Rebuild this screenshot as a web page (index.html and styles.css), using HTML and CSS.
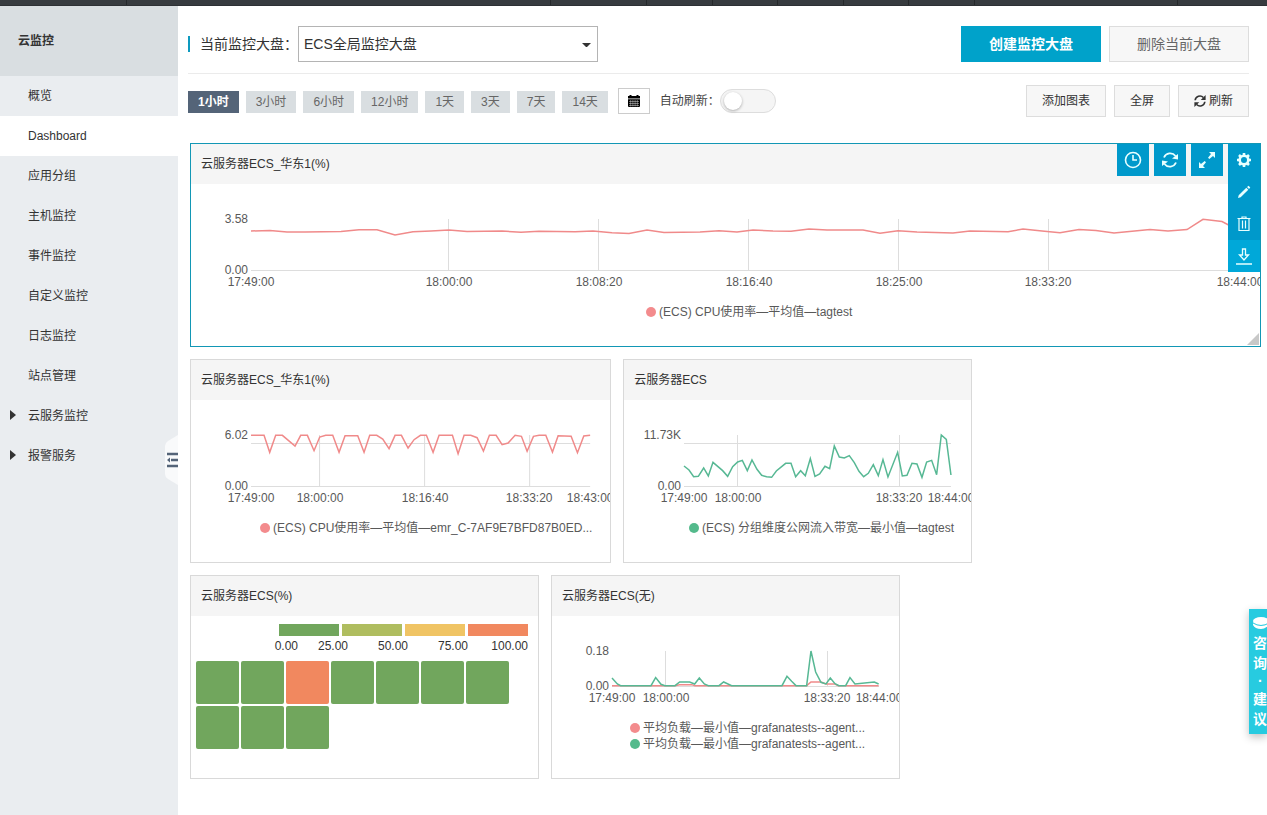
FILE: index.html
```html
<!DOCTYPE html>
<html lang="zh-CN">
<head>
<meta charset="utf-8">
<meta name="viewport" content="width=device-width, initial-scale=1">
<title>云监控</title>
<link rel="stylesheet" href="styles.css">
</head>
<body>
<div class="topbar"><i class="seg seg-a"></i><i class="seg seg-b"></i><i class="seg seg-c"></i><i class="seg seg-d"></i><i class="seg seg-d"></i><i class="seg seg-d"></i><i class="seg seg-d"></i><i class="seg seg-d"></i><i class="seg seg-e"></i></div>
<div class="layout">
  <aside class="sidebar">
    <h1 class="product">云监控</h1>
    <nav class="nav">
      <a class="nav-item" href="#">概览</a>
      <a class="nav-item active" href="#">Dashboard</a>
      <a class="nav-item" href="#">应用分组</a>
      <a class="nav-item" href="#">主机监控</a>
      <a class="nav-item" href="#">事件监控</a>
      <a class="nav-item" href="#">自定义监控</a>
      <a class="nav-item" href="#">日志监控</a>
      <a class="nav-item" href="#">站点管理</a>
      <a class="nav-item parent" href="#">云服务监控</a>
      <a class="nav-item parent" href="#">报警服务</a>
    </nav>
    <button class="collapse" type="button" aria-label="收起">
      <svg width="13" height="50" viewBox="0 0 13 50"><path d="M13 0 3 6Q0 8 0 11V39Q0 42 3 44L13 50Z" fill="#f9fafb"/><path d="M2 19H13M6 25H13M2 31H13" stroke="#546478" stroke-width="2.4"/><path d="M2 25 5 22.5V27.500Z" fill="#546478"/></svg>
    </button>
  </aside>

  <main class="main">
    <div class="title-row">
      <label class="board-label" for="board">当前监控大盘：</label>
      <div class="select-wrap">
        <select id="board" class="board-select"><option>ECS全局监控大盘</option></select>
        <svg class="caret" width="9" height="5" viewBox="0 0 9 5"><path d="M0 0H9L5.500 3.500Q4.500 4.500 3.500 3.500Z" fill="#333"/></svg>
      </div>
      <div class="title-actions">
        <button class="btn-lg primary" type="button">创建监控大盘</button>
        <button class="btn-lg" type="button">删除当前大盘</button>
      </div>
    </div>

    <div class="tool-row">
      <div class="ranges">
        <button class="range on" type="button">1小时</button>
        <button class="range" type="button">3小时</button>
        <button class="range" type="button">6小时</button>
        <button class="range" type="button">12小时</button>
        <button class="range" type="button">1天</button>
        <button class="range" type="button">3天</button>
        <button class="range" type="button">7天</button>
        <button class="range" type="button">14天</button>
      </div>
      <button class="calendar" type="button" aria-label="选择日期">
        <svg width="12" height="12" viewBox="0 0 12 12"><path d="M0 1H1.500V0H3.500V1H8.500V0H10.500V1H12V3.500H0ZM0 4.300H12V11Q12 12 11 12H1Q0 12 0 11Z" fill="#000"/><path d="M1 6.500H11M1 8.500H11M1 10.500H11M2.700 5V11.500M4.900 5V11.500M7.100 5V11.500M9.300 5V11.500" stroke="#fff" stroke-width=".4"/></svg>
      </button>
      <label class="auto-label" for="auto">自动刷新：</label>
      <input id="auto" class="switch" type="checkbox">
      <div class="tool-actions">
        <button class="btn" type="button">添加图表</button>
        <button class="btn" type="button">全屏</button>
        <button class="btn" type="button"><svg width="12" height="12" viewBox="0 0 16 16"><path d="M1.500 7A6.500 6.500 0 0 1 12.500 3.300M14.500 9A6.500 6.500 0 0 1 3.500 12.700" fill="none" stroke="#333" stroke-width="2.200"/><path d="M15.500 0V6.500H9ZM.5 16V9.500H7Z" fill="#333"/></svg>刷新</button>
      </div>
    </div>

    <div class="grid">
      <section class="card wide selected">
        <h2 class="card-title">云服务器ECS_华东1(%)</h2>
        <svg class="chart" viewBox="191 184 1069 162">
          <path class="gridline" d="M251 270.500H1240M448.500 219V270M598.500 219V270M748.500 219V270M898.500 219V270M1048.500 219V270"/>
          <polyline class="line red" points="251,231 270,230.500 287,232 305,232 341,231.500 359,229.700 377,229.700 395,235 413,231.700 431,231 449,230 467,231.500 502,231 521,232.300 539,231.300 575,231.800 593,231 612,232.700 629,233.500 647,230 664,232.600 700,232 719,230.700 737,232 753,230 773,231 791,231.300 809,229 827,230 863,230 880,233.300 898,230.800 917,232 953,233 970,231 1008,231.700 1023,229 1042,231 1060,232.700 1079,229.500 1096,230.500 1114,233 1132,231.200 1150,229.600 1168,231 1187,229.600 1203,219.300 1222,221.500 1240,231"/>
          <g class="end"><text x="248" y="223">3.58</text><text x="248" y="274">0.00</text></g>
          <g class="mid"><text x="251" y="286">17:49:00</text><text x="449" y="286">18:00:00</text><text x="599" y="286">18:08:20</text><text x="749" y="286">18:16:40</text><text x="899" y="286">18:25:00</text><text x="1048" y="286">18:33:20</text><text x="1240" y="286">18:44:00</text></g>
          <circle class="dot-red" cx="651" cy="312" r="5"/><text x="659" y="316">(ECS) CPU使用率—平均值—tagtest</text>
        </svg>
        <div class="tools">
          <button class="tool" type="button" aria-label="时间"><svg width="18" height="18" viewBox="0 0 18 18"><circle cx="9" cy="9" r="7.500" fill="none" stroke="#e8ffff" stroke-width="1.600"/><path d="M9 4V9H13" fill="none" stroke="#e8ffff" stroke-width="1.600"/></svg></button>
          <button class="tool" type="button" aria-label="刷新"><svg width="18" height="18" viewBox="0 0 18 18"><path d="M3 6.500A6.700 6.700 0 0 1 14.500 5M15 11.500A6.700 6.700 0 0 1 3.500 13" fill="none" stroke="#e8ffff" stroke-width="1.800"/><path d="M17 3V8.500L11 7.500ZM1 15V9.500L7 10.500Z" fill="#e8ffff"/></svg></button>
          <button class="tool" type="button" aria-label="放大"><svg width="18" height="18" viewBox="0 0 18 18"><path d="M11 1H17V7L15 5 11.300 8 10 6.700 13 3ZM7 17H1V11L3 13 6.700 10 8 11.300 5 15Z" fill="#e8ffff"/></svg></button>
          <div class="tool-menu">
            <button class="tool" type="button" aria-label="设置"><svg width="16" height="16" viewBox="0 0 16 16"><circle cx="8" cy="8" r="4.300" fill="none" stroke="#e8ffff" stroke-width="2.600"/><path d="M8 1V4M8 12V15M1 8H4M12 8H15M3 3 5 5M11 11 13 13M3 13 5 11M11 5 13 3" stroke="#e8ffff" stroke-width="2.600"/></svg></button>
            <button class="tool" type="button" aria-label="编辑"><svg width="14" height="14" viewBox="0 0 14 14"><path d="M1 13 1.700 10.300 9.300 2.700 11.300 4.700 3.700 12.300ZM10 2 11.500.7 13.300 2.500 12 4Z" fill="#e8ffff"/></svg></button>
            <button class="tool" type="button" aria-label="删除"><svg width="14" height="16" viewBox="0 0 14 16"><path d="M.5 2.500H13.500M5 2.500V1H9V2.500M2 2.500V14.500H12V2.500M5.500 4.500V12.500M8.500 4.500V12.500" fill="none" stroke="#e8ffff" stroke-width="1.200"/></svg></button>
            <button class="tool bright" type="button" aria-label="下载"><svg width="16" height="18" viewBox="0 0 16 18"><path d="M6.500 2H9.500V8H12.500L8 13 3.500 8H6.500ZM0 17H16" fill="none" stroke="#e8ffff" stroke-width="1.300"/></svg></button>
          </div>
        </div>
        <i class="resize"></i>
      </section>

      <section class="card medium">
        <h2 class="card-title">云服务器ECS_华东1(%)</h2>
        <svg class="chart" viewBox="191 400 419 162">
          <path class="gridline" d="M251 443.500H590M251 486.500H590M319.500 435V486M424.500 435V486M529.500 435V486"/>
          <polyline class="line red" transform="translate(185 355) scale(.3333)" points="198,241 237,241 254,292 272,241 292,241 330,273 347,241 367,241 387,287 404,246 422,241 443,241 462,292 480,242 518,242 537,292 554,241 575,241 593,252 612,281 630,241 649,241 669,279 687,254 706,241 724,241 744,292 762,241 802,241 819,296 837,241 857,241 876,248 895,288 913,241 933,241 951,269 969,264 990,241 1009,244 1026,289 1045,244 1062,241 1082,241 1102,291 1119,242 1158,244 1177,293 1196,243 1215,241"/>
          <g class="end"><text x="248" y="439">6.02</text><text x="248" y="490">0.00</text></g>
          <g class="mid"><text x="251" y="502">17:49:00</text><text x="320" y="502">18:00:00</text><text x="425" y="502">18:16:40</text><text x="529" y="502">18:33:20</text><text x="590" y="502">18:43:00</text></g>
          <circle class="dot-red" cx="265" cy="528" r="5"/><text x="273" y="532">(ECS) CPU使用率—平均值—emr_C-7AF9E7BFD87B0ED...</text>
        </svg>
      </section>

      <section class="card small">
        <h2 class="card-title">云服务器ECS</h2>
        <svg class="chart" viewBox="624 400 347 162">
          <path class="gridline" d="M684 443.500H951M684 486.500H951M737.500 435V486M899.500 435V486"/>
          <polyline class="line green" transform="translate(615 355) scale(.3333)" points="207,333 222,345 236,365 250,364 266,339 280,363 294,322 323,347 338,364 353,335 368,321 382,316 397,347 411,315 426,343 440,361 455,365 470,367 484,348 512,325 528,325 542,365 557,347 571,362 586,311 600,364 614,357 630,334 644,341 658,273 673,306 688,309 703,302 718,323 732,349 746,365 760,355 775,329 790,362 804,314 819,366 848,292 862,363 876,361 891,325 906,327 921,367 935,321 950,316 965,359 979,240 994,253 1008,360"/>
          <g class="end"><text x="681" y="439">11.73K</text><text x="681" y="490">0.00</text></g>
          <g class="mid"><text x="684" y="502">17:49:00</text><text x="738" y="502">18:00:00</text><text x="899" y="502">18:33:20</text><text x="951" y="502">18:44:00</text></g>
          <circle class="dot-green" cx="694" cy="528" r="5"/><text x="702" y="532">(ECS) 分组维度公网流入带宽—最小值—tagtest</text>
        </svg>
      </section>

      <section class="card small first">
        <h2 class="card-title">云服务器ECS(%)</h2>
        <div class="heat">
          <div class="scale"><i class="g1"></i><i class="g2"></i><i class="g3"></i><i class="g4"></i></div>
          <div class="scale-labels"><span class="zero">0.00</span><span>25.00</span><span>50.00</span><span>75.00</span><span>100.00</span></div>
          <div class="cells"><i class="g1"></i><i class="g1"></i><i class="g4"></i><i class="g1"></i><i class="g1"></i><i class="g1"></i><i class="g1"></i><i class="g1"></i><i class="g1"></i><i class="g1"></i></div>
        </div>
      </section>

      <section class="card small">
        <h2 class="card-title">云服务器ECS(无)</h2>
        <svg class="chart" viewBox="552 616 347 162">
          <path class="gridline" d="M612 686.500H879M665.500 651V686M827.500 651V686"/>
          <polyline class="line red" transform="translate(545 570) scale(.3333)" points="201,347 390,347 404,344 440,344 450,347 785,347 798,336 828,336 843,342 870,342 880,347 1001,347"/>
          <polyline class="line green" transform="translate(545 570) scale(.3333)" points="201,324 217,342 227,347 318,347 332,323 348,343 360,347 390,347 404,336 434,336 449,342 463,324 478,342 490,347 522,347 536,336 560,347 711,347 726,319 740,334 753,347 785,347 798,243 812,306 828,337 843,342 856,324 870,341 882,347 902,347 915,323 930,342 988,336 1001,342"/>
          <g class="end"><text x="609" y="655">0.18</text><text x="609" y="690">0.00</text></g>
          <g class="mid"><text x="612" y="702">17:49:00</text><text x="666" y="702">18:00:00</text><text x="827" y="702">18:33:20</text><text x="879" y="702">18:44:00</text></g>
          <circle class="dot-red" cx="635" cy="728" r="5"/><text x="643" y="732">平均负载—最小值—grafanatests--agent...</text>
          <circle class="dot-green" cx="635" cy="744" r="5"/><text x="643" y="748">平均负载—最小值—grafanatests--agent...</text>
        </svg>
      </section>
    </div>
  </main>
</div>
<a class="feedback" href="#">
  <svg width="16" height="12" viewBox="0 0 16 12"><ellipse cx="8" cy="4" rx="8" ry="4" fill="#fff"/><path d="M0 5Q8 11 16 5V8Q12 12 8 12Q2 12 0 8Z" fill="#fff"/><path d="M0 6Q8 11 16 6" fill="none" stroke="#27cbe0" stroke-width="1"/></svg>
  <span>咨</span><span>询</span><span class="sep">·</span><span>建</span><span>议</span>
</a>
</body>
</html>
```

FILE: styles.css
```css
* { box-sizing: border-box; }

body {
  margin: 0;
  position: relative;
  overflow-x: hidden;
  background: #fff;
  color: #333;
  font: 12px/20px "Liberation Sans", "Noto Sans CJK SC", sans-serif;
}

button, select, input { font: inherit; color: inherit; margin: 0; }
button { padding: 0; border: 0; cursor: pointer; }
a { color: inherit; text-decoration: none; }
svg { display: block; }

.topbar { display: flex; height: 6px; background: #373b3f; border-bottom: 1px solid #2d3034; }
.seg { flex: none; border-right: 1px solid #25282b; }
.seg-a { width: 10%; }
.seg-b { width: 33.5%; }
.seg-c { width: 7.6%; }
.seg-d { width: 5.17%; }
.seg-e { width: 16%; }

.layout { display: flex; min-height: calc(100vh - 6px); }

/* Sidebar */
.sidebar { position: relative; flex: none; width: 178px; background: #eaedf0; }
.product { margin: 0; padding-left: 18px; background: #d9dee1; font-size: 12px; line-height: 70px; }
.nav { display: flex; flex-direction: column; }
.nav-item { position: relative; padding-left: 28px; line-height: 40px; }
.nav-item.active { background: #fff; }
.parent::before {
  content: "";
  position: absolute;
  left: 10px;
  top: 14px;
  border: 5px solid transparent;
  border-left: 6px solid #333;
  border-right: 0;
}
.collapse { position: absolute; right: 0; top: 429px; background: none; }

/* Toolbars */
.main { flex: 1; min-width: 0; padding-top: 20px; }
.title-row {
  display: flex;
  align-items: center;
  margin: 0 18px 0 10px;
  padding-bottom: 11px;
  border-bottom: 1px solid #ebebeb;
  font-size: 14px;
}
.board-label { border-left: 2px solid #0e9abf; padding-left: 10px; line-height: 16px; }
.select-wrap { position: relative; width: 300px; }
.board-select {
  appearance: none;
  display: block;
  width: 100%;
  height: 36px;
  padding: 0 24px 0 5px;
  border: 1px solid #b4b4b4;
  border-radius: 0;
  background: #fff;
}
.caret { position: absolute; right: 7px; top: 17px; pointer-events: none; }
.title-actions { display: flex; gap: 8px; margin-left: auto; }
.btn-lg { width: 140px; height: 36px; border: 1px solid #ddd; background: #f7f7f7; color: #666; }
.btn-lg.primary { border-color: #00a2ca; background: #00a2ca; color: #fff; font-weight: bold; }

.tool-row { display: flex; align-items: center; margin: 11px 18px 26px 10px; }
.ranges { display: flex; gap: 7px; padding-top: 2px; }
.range { height: 22px; padding: 0 10px; background: #d9dee1; color: #666; }
.range.on { background: #546478; color: #fff; font-weight: bold; }
.calendar {
  display: flex;
  align-items: center;
  justify-content: center;
  width: 32px;
  height: 26px;
  margin: 0 10px;
  border: 1px solid #ccc;
  background: #fff;
}
.auto-label { color: #444; }
.switch {
  appearance: none;
  width: 56px;
  height: 24px;
  padding: 2px 3px;
  border: 1px solid #ddd;
  border-radius: 12px;
  background: #f5f5f5;
}
.switch::before {
  content: "";
  display: block;
  width: 18px;
  height: 18px;
  border-radius: 50%;
  background: #fff;
  box-shadow: 0 1px 3px rgba(0, 0, 0, .3);
}
.tool-actions { display: flex; gap: 8px; margin-left: auto; }
.btn {
  display: flex;
  align-items: center;
  gap: 3px;
  height: 32px;
  padding: 0 15px;
  border: 1px solid #ddd;
  background: #f7f7f7;
}

/* Cards */
.grid { display: grid; grid-template-columns: repeat(15, 1fr); gap: 12px; margin: 0 6px 36px 12px; }
.card { position: relative; min-width: 0; min-height: 204px; border: 1px solid #d9d9d9; background: #fff; }
.wide { grid-column: span 15; }
.medium { grid-column: span 6; }
.small { grid-column: span 5; }
.first { grid-column: 1 / span 5; }
.selected { border-color: #1297b5; }
.card-title { margin: 0; padding-left: 10px; background: #f5f5f5; font-size: 12px; font-weight: normal; line-height: 40px; }

.chart { width: 100%; height: auto; overflow: hidden; font-size: 12px; fill: #595959; }
.gridline { fill: none; stroke: #ddd; }
.line { fill: none; stroke-width: 1.5px; vector-effect: non-scaling-stroke; }
.line.red { stroke: #f08a8a; }
.line.green { stroke: #57b894; }
.dot-red { fill: #f38b8d; }
.dot-green { fill: #54ba8c; }
.end { text-anchor: end; }
.mid { text-anchor: middle; }

.tools { position: absolute; top: 0; right: 0; display: flex; align-items: flex-start; gap: 5px; }
.tool { display: flex; align-items: center; justify-content: center; width: 32px; height: 32px; background: #0099cb; }
.tool.bright { background: #00a8d9; }
.resize {
  position: absolute;
  right: 1px;
  bottom: 1px;
  border: 6px solid #c8c8c8;
  border-top-color: transparent;
  border-left-color: transparent;
}

/* Heat map */
.heat { padding: 8px 10px 0 5px; }
.scale { display: flex; justify-content: flex-end; gap: 3px; }
.scale i { width: 60px; height: 12px; }
.scale-labels { display: flex; justify-content: flex-end; margin-bottom: 5px; text-align: right; }
.scale-labels span { width: 60px; }
.scale-labels .zero { margin-right: -10px; }
.cells { display: flex; flex-wrap: wrap; gap: 2px; }
.cells i { width: 43px; height: 43px; border-radius: 2px; }
.g1 { background: #71a65d; }
.g2 { background: #afbd5f; }
.g3 { background: #f0c464; }
.g4 { background: #f1885f; }

/* Feedback tab */
.feedback {
  position: absolute;
  top: 609px;
  right: 0;
  display: flex;
  flex-direction: column;
  width: 18px;
  height: 125px;
  padding: 8px 0 0 4px;
  overflow: hidden;
  background: #27cbe0;
  box-shadow: 0 3px 8px rgba(0, 0, 0, .25);
  color: #fff;
  font-size: 14px;
  font-weight: bold;
}
.feedback svg { flex: none; margin-bottom: 4px; }
.feedback .sep { padding-left: 5px; line-height: 16px; }
```
